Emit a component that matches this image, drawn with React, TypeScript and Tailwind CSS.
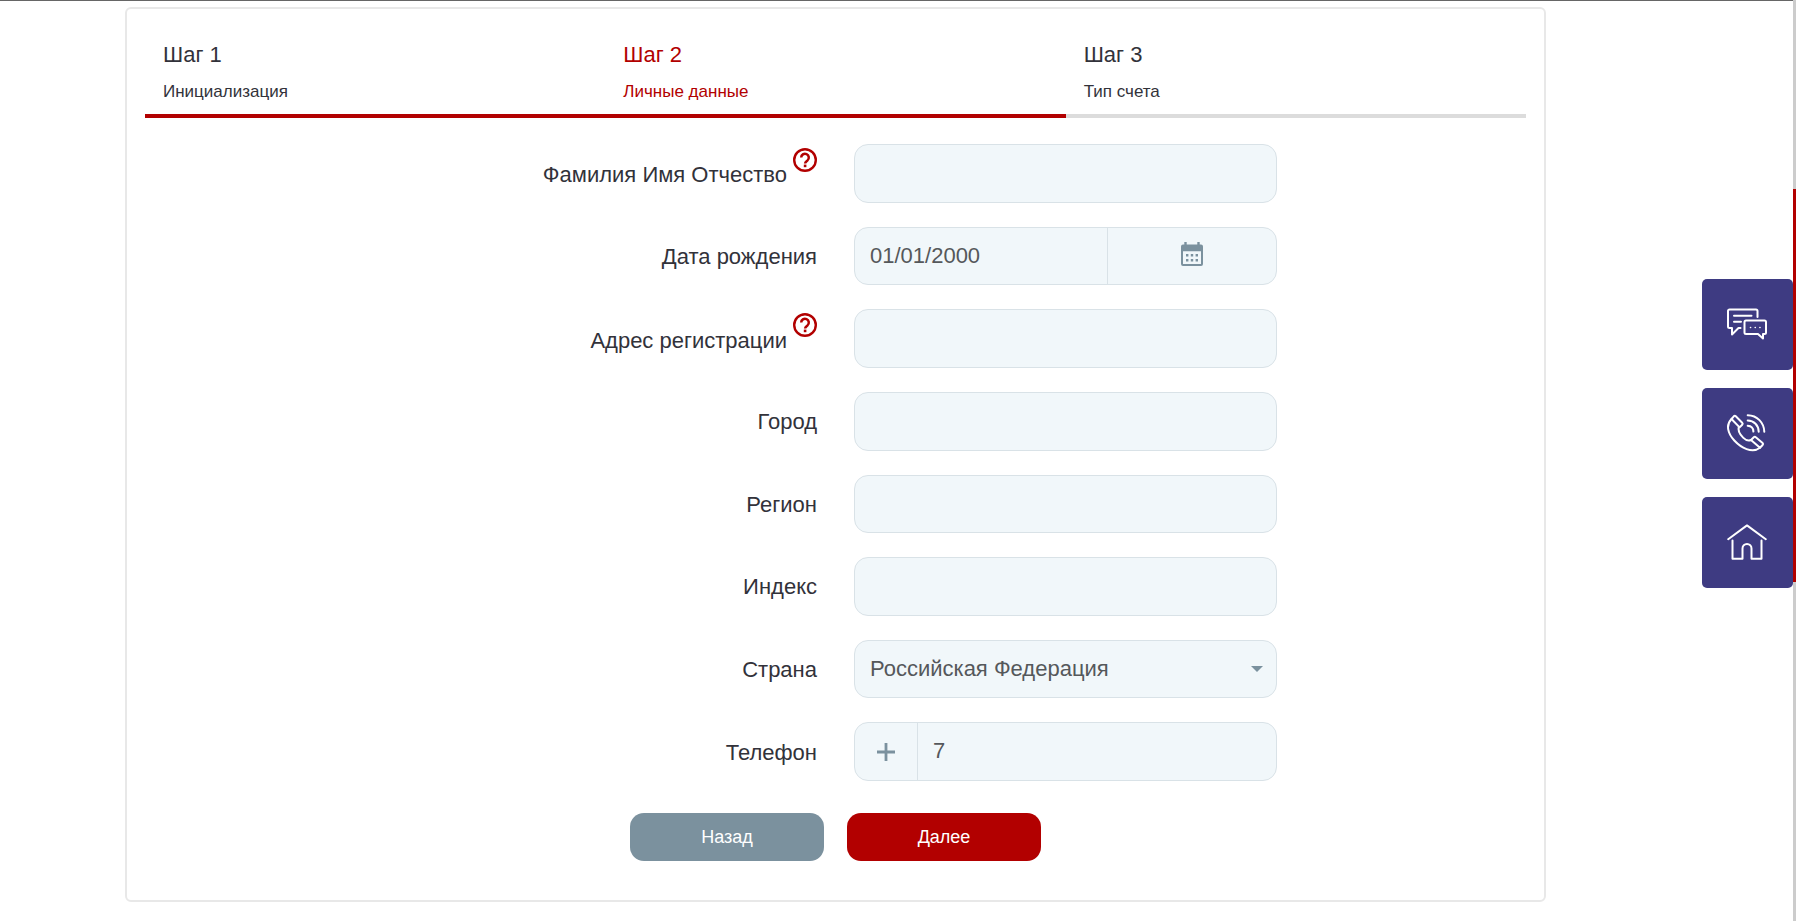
import { useState, type ReactNode } from "react";

const steps = [
  { title: "Шаг 1", name: "Инициализация", reached: true, current: false },
  { title: "Шаг 2", name: "Личные данные", reached: true, current: true },
  { title: "Шаг 3", name: "Тип счета", reached: false, current: false },
];

const boxClass =
  "h-full w-full rounded-[14px] border border-[#d9e2e7] bg-[#f1f7fa] text-[22px] leading-[26px] text-[#55585b] outline-none focus-within:border-[#7b919e]";

const linkClass = "flex h-[91px] w-[91px] items-center justify-center rounded-[5px] bg-[#3e3b82] pb-[2px] pr-[2px]";

function HelpIcon() {
  return (
    <svg viewBox="0 0 24 24" className="h-6 w-6" fill="none" aria-hidden="true">
      <circle cx="12" cy="12" r="10.8" stroke="#b20000" strokeWidth="2.4" />
      <path d="M8.200 9.600a3.800 3.800 0 1 1 6.300 2.800c-1.500 1.200-2.400 1.600-2.400 3.200" stroke="#b20000" strokeWidth="2.500" />
      <rect x="10.800" y="16.600" width="2.600" height="2.600" fill="#b20000" />
    </svg>
  );
}

function CalendarIcon() {
  return (
    <svg viewBox="0 0 22 24" className="h-6 w-[22px]" aria-hidden="true">
      <path
        fill="#7b919e"
        d="M3.300 0h2.400v2.400h10.600V0h2.400v2.400H20a2 2 0 0 1 2 2V22a2 2 0 0 1-2 2H2a2 2 0 0 1-2-2V4.400a2 2 0 0 1 2-2h1.300z"
      />
      <path fill="#f1f7fa" d="M2 9.300h18V22H2z" />
      <path fill="#7b919e" d="M5 12h2.400v2.400H5zM9.800 12h2.400v2.400H9.800zM14.600 12H17v2.400h-2.400zM5 17h2.400v2.400H5zM9.800 17h2.400v2.400H9.800zM14.600 17H17v2.400h-2.400z" />
    </svg>
  );
}

function ChatIcon() {
  return (
    <svg viewBox="0 0 40 32" className="h-8 w-10" fill="none" stroke="#fff" strokeWidth="2" strokeLinejoin="round" strokeLinecap="round" aria-hidden="true">
      <path d="M30.500 9V3A1.500 1.500 0 0 0 29 1.500H2.500A1.500 1.500 0 0 0 1 3v15.500A1.500 1.500 0 0 0 2.500 20H5v6.500L11.500 20H13.500" />
      <path d="M7 7.800h17.500M7 13.800h7" />
      <path d="M19 12.500h18.500A1.500 1.500 0 0 1 39 14v10.500a1.500 1.500 0 0 1-1.500 1.500H36v4.500L31 26H19a1.500 1.500 0 0 1-1.500-1.500V14a1.500 1.500 0 0 1 1.500-1.500z" />
      <path d="M23.500 19.500h.1M28.200 19.500h.1M32.900 19.500h.1" strokeWidth="1.600" />
    </svg>
  );
}

function PhoneIcon() {
  return (
    <svg viewBox="0 0 39 38" className="h-[38px] w-[39px]" fill="none" stroke="#fff" strokeWidth="2" strokeLinejoin="round" strokeLinecap="round" aria-hidden="true">
      <path d="M4.500 5C-1.500 11 .800 19.500 7.300 26.500S25 40 33 33.800" />
      <path d="M4.500 5 6.800 2.300q1-1 2 0l6.400 6.400q1 1 0 2L12.600 13.400z" />
      <path d="M24 26l2.800-2.800q1-1 2 0l6.800 5.800q1 1 0 2L33 33.800z" />
      <path d="M11.800 12.800c-1.200 4 1.600 8.200 4.300 10.800 2.400 2.400 5 3.700 7.900 2.400" />
      <path d="M20.700 1.200c9.500.2 16.300 7.300 16.600 16.600M20.700 6.500c6.300.2 10.900 4.800 11 11.300M20.700 11.700c3.500.2 5.600 2.500 5.700 5.900" />
    </svg>
  );
}

function HomeIcon() {
  return (
    <svg viewBox="0 0 40 36" className="h-9 w-10" fill="none" stroke="#fff" strokeWidth="2" strokeLinejoin="round" strokeLinecap="round" aria-hidden="true">
      <path d="M1.200 15.200 20 1.400l18.800 13.800" />
      <path d="M5.500 16.500V34.800h10V24.500a4.500 4.500 0 0 1 9 0V34.800h10V16.500" />
    </svg>
  );
}

function Field({ id, label, help, children }: { id: string; label: string; help?: boolean; children: ReactNode }) {
  return (
    <>
      <div className="col-start-1 flex items-center justify-end gap-[6px] text-[22px] leading-[26px] text-[#32323a]">
        <label htmlFor={id} className={help ? "pt-1" : "pt-[2px]"}>{label}</label>
        {help && (
          <button type="button" aria-label="Подсказка" className="mt-1 self-start">
            <HelpIcon />
          </button>
        )}
      </div>
      <div>{children}</div>
    </>
  );
}

export default function App() {
  const [birth, setBirth] = useState("01/01/2000");
  const [phone, setPhone] = useState("7");

  return (
    <div className="min-h-screen border-t border-[#666] bg-white pt-[6px] pb-[19px] pl-[125px] pr-[250px] font-['Liberation_Sans',Arial,sans-serif]">
      <main className="rounded-[6px] border-2 border-[#e8e8e8] px-[18px] pt-[31px] pb-[39px]">
        <ol className="grid grid-cols-3">
          {steps.map((s) => (
            <li
              key={s.title}
              aria-current={s.current ? "step" : undefined}
              className={`border-b-4 pl-[18px] pb-3 ${s.reached ? "border-[#b20000]" : "border-[#dcdcdc]"} ${s.current ? "text-[#b20000]" : "text-[#32323a]"}`}
            >
              <h2 className="text-[22px] leading-[30px]">{s.title}</h2>
              <p className="mt-[11px] text-[17px] leading-[21px]">{s.name}</p>
            </li>
          ))}
        </ol>

        <form onSubmit={(e) => e.preventDefault()}>
          <div className="mt-[26px] grid min-h-[637px] auto-rows-fr grid-cols-[672fr_423fr_212fr] gap-x-[37px] gap-y-6">
            <Field id="fio" label="Фамилия Имя Отчество" help>
              <input id="fio" className={`${boxClass} px-[15px]`} />
            </Field>
            <Field id="birth" label="Дата рождения">
              <div className={`${boxClass} flex overflow-hidden`}>
                <input id="birth" value={birth} onChange={(e) => setBirth(e.target.value)} className="w-3/5 border-r border-[#d9e2e7] pl-[15px] outline-none" />
                <button type="button" aria-label="Календарь" className="flex w-2/5 items-center justify-center pb-1">
                  <CalendarIcon />
                </button>
              </div>
            </Field>
            <Field id="address" label="Адрес регистрации" help>
              <input id="address" className={`${boxClass} px-[15px]`} />
            </Field>
            <Field id="city" label="Город">
              <input id="city" className={`${boxClass} px-[15px]`} />
            </Field>
            <Field id="region" label="Регион">
              <input id="region" className={`${boxClass} px-[15px]`} />
            </Field>
            <Field id="zip" label="Индекс">
              <input id="zip" className={`${boxClass} px-[15px]`} />
            </Field>
            <Field id="country" label="Страна">
              <div className="relative h-full">
                <select id="country" className={`${boxClass} appearance-none pl-[15px] pr-10`}>
                  <option>Российская Федерация</option>
                </select>
                <svg viewBox="0 0 12 6" className="pointer-events-none absolute right-[14px] top-1/2 -mt-[3px] h-[6px] w-3" fill="#7b919e" aria-hidden="true">
                  <path d="M0 0h12L6 6z" />
                </svg>
              </div>
            </Field>
            <Field id="phone" label="Телефон">
              <div className={`${boxClass} flex overflow-hidden`}>
                <span className="flex w-[63px] shrink-0 items-center justify-center border-r border-[#d9e2e7]">
                  <svg viewBox="0 0 18 18" className="h-[18px] w-[18px]" fill="#7b919e" role="img" aria-label="плюс">
                    <path d="M7.600 0h2.800v7.600H18v2.800h-7.600V18H7.600v-7.600H0V7.600h7.600z" />
                  </svg>
                </span>
                <input id="phone" type="tel" value={phone} onChange={(e) => setPhone(e.target.value)} className="min-w-0 grow pb-[2px] pl-[15px] outline-none" />
              </div>
            </Field>
          </div>

          <div className="mt-8 flex justify-center gap-[23px] text-[18px] leading-[22px] text-white">
            <button type="button" className="h-12 w-[194px] rounded-[14px] bg-[#7b919e]">Назад</button>
            <button type="submit" className="h-12 w-[194px] rounded-[14px] bg-[#b20000]">Далее</button>
          </div>
        </form>
      </main>

      <nav aria-label="Быстрые ссылки" className="fixed right-[3px] top-[279px] flex flex-col gap-[18px]">
        <a href="#chat" aria-label="Чат" className={linkClass}>
          <ChatIcon />
        </a>
        <a href="#call" aria-label="Звонок" className={linkClass}>
          <PhoneIcon />
        </a>
        <a href="#home" aria-label="Главная" className={linkClass}>
          <HomeIcon />
        </a>
      </nav>

      <div className="fixed inset-y-0 right-0 w-[3px] bg-[#cccccc] pt-[189px]">
        <div className="h-[393px] bg-[#b20000]" />
      </div>
    </div>
  );
}
